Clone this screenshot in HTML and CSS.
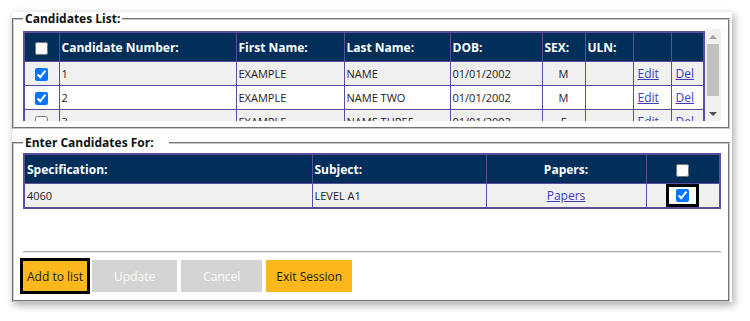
FILE: index.html
```html
<!DOCTYPE html>
<html lang="en">
<head>
  <meta charset="UTF-8">
  <meta name="viewport" content="width=device-width, initial-scale=1.0">
  <title>Candidates</title>
  <link rel="stylesheet" href="styles.css">
</head>
<body>
  <div class="window">
    <fieldset class="group">
      <legend>Candidates List:</legend>
      <div class="list-box">
        <div class="scroll">
          <table class="grid">
            <colgroup>
              <col style="width:35px"><col style="width:177px"><col style="width:108px">
              <col style="width:106px"><col style="width:92px"><col style="width:43px">
              <col style="width:48px"><col style="width:38px"><col>
            </colgroup>
            <thead>
              <tr>
                <th class="center"><input type="checkbox"></th>
                <th>Candidate Number:</th>
                <th>First Name:</th>
                <th>Last Name:</th>
                <th>DOB:</th>
                <th>SEX:</th>
                <th>ULN:</th>
                <th></th>
                <th></th>
              </tr>
            </thead>
            <tbody>
              <tr>
                <td class="center"><input type="checkbox" checked></td>
                <td>1</td>
                <td>EXAMPLE</td>
                <td>NAME</td>
                <td>01/01/2002</td>
                <td class="center">M</td>
                <td></td>
                <td><a href="#">Edit</a></td>
                <td><a href="#">Del</a></td>
              </tr>
              <tr>
                <td class="center"><input type="checkbox" checked></td>
                <td>2</td>
                <td>EXAMPLE</td>
                <td>NAME TWO</td>
                <td>01/01/2002</td>
                <td class="center">M</td>
                <td></td>
                <td><a href="#">Edit</a></td>
                <td><a href="#">Del</a></td>
              </tr>
              <tr>
                <td class="center"><input type="checkbox"></td>
                <td>3</td>
                <td>EXAMPLE</td>
                <td>NAME THREE</td>
                <td>01/01/2002</td>
                <td class="center">F</td>
                <td></td>
                <td><a href="#">Edit</a></td>
                <td><a href="#">Del</a></td>
              </tr>
            </tbody>
          </table>
        </div>
        <!-- classic scrollbar look -->
        <div class="scrollbar">
          <span class="arrow arrow-up"></span>
          <span class="thumb"></span>
          <span class="arrow arrow-down"></span>
        </div>
      </div>
    </fieldset>

    <fieldset class="group group-enter">
      <legend class="legend-wide">Enter Candidates For:</legend>
      <table class="grid">
        <colgroup>
          <col style="width:288px"><col style="width:174px"><col style="width:160px"><col>
        </colgroup>
        <thead>
          <tr>
            <th>Specification:</th>
            <th>Subject:</th>
            <th class="center">Papers:</th>
            <th class="center"><input type="checkbox"></th>
          </tr>
        </thead>
        <tbody>
          <tr>
            <td>4060</td>
            <td>LEVEL A1</td>
            <td class="center"><a href="#" class="papers">Papers</a></td>
            <td class="center"><span class="focused"><input type="checkbox" checked></span></td>
          </tr>
        </tbody>
      </table>
      <hr class="divider">
      <div class="actions">
        <button class="btn btn-add">Add to list</button>
        <button class="btn btn-off">Update</button>
        <button class="btn btn-off">Cancel</button>
        <button class="btn btn-exit">Exit Session</button>
      </div>
    </fieldset>
  </div>
</body>
</html>
```

FILE: styles.css
```css
body {
  margin: 0;
  background: #ffffff;
  font-family: "Open Sans", Arial, sans-serif;
  color: #222;
}

.window {
  margin: 12px;
  width: 720px;
  background: #ffffff;
  box-shadow: 2px 3px 8px rgba(0, 0, 0, 0.35);
}

.group {
  margin: 0 2px 0 0;
  padding: 3px 7px 6px 9px;
  border: 2px groove #c8c8c8;
  min-width: 0;
}

.group legend {
  padding: 0 2px;
  font-size: 12px;
  font-weight: bold;
  line-height: 14px;
  color: #111;
}

.legend-wide {
  padding-right: 15px !important;
}

.group-enter {
  margin-top: 7px;
  padding-bottom: 8px;
}

/* candidates list scroll box */
.list-box {
  display: flex;
  height: 92px;
}

.scroll {
  flex: 1;
  min-width: 0;
  overflow: hidden;
  background: #ffffff;
}

.scrollbar {
  width: 16px;
  display: flex;
  flex-direction: column;
  align-items: center;
  background: #f0f0f0;
}

.arrow {
  height: 15px;
  width: 16px;
  display: flex;
  align-items: center;
  justify-content: center;
}

.arrow::before {
  content: "";
  border-left: 4px solid transparent;
  border-right: 4px solid transparent;
}

.arrow-up::before {
  border-bottom: 4px solid #a3a3a3;
}

.arrow-down {
  margin-top: auto;
}

.arrow-down::before {
  border-top: 4px solid #505050;
}

.thumb {
  width: 12px;
  height: 52px;
  background: #c1c1c1;
}

.grid {
  width: 100%;
  table-layout: fixed;
  border-collapse: collapse;
  border: 2px solid #5b4c9e;
  font-size: 11px;
}

.scroll .grid {
  margin-top: 2px;
}

.grid th {
  height: 28px;
  padding: 0 2px;
  background: #012f5a;
  color: #ffffff;
  font-size: 12px;
  font-weight: bold;
  text-align: left;
  border: 1px solid #5b4c9e;
  white-space: nowrap;
}

.grid td {
  height: 23px;
  padding: 0 2px;
  background: #f0f0f0;
  border: 1px solid #5b4c9e;
  white-space: nowrap;
  overflow: hidden;
}

.grid tbody tr:nth-child(2) td {
  background: #ffffff;
}

.grid .center {
  text-align: center;
}

.grid input[type="checkbox"] {
  margin: 0;
  width: 13px;
  height: 13px;
  vertical-align: middle;
}

.grid a {
  color: #3b3bc4;
  margin-left: 2px;
  font-size: 12px;
}

.grid a.papers {
  margin-left: 0;
}

.focused {
  display: inline-block;
  border: 3px solid #000;
  padding: 2px 7px;
  line-height: 0;
  background: #fff;
}

.divider {
  margin: 42px 0 7px 0;
  border: none;
  border-top: 1px solid #aaa;
  border-bottom: 1px solid #e8e8e8;
}

.actions {
  display: flex;
  gap: 4px;
}

.btn {
  height: 32px;
  border: none;
  font-family: "Open Sans", Arial, sans-serif;
  font-size: 12px;
  cursor: pointer;
}

.btn-add {
  padding: 0 5px;
  background: #ffb81c;
  color: #1a1a1a;
  outline: 3px solid #000;
  outline-offset: -1px;
  margin-left: -1px;
}

.btn-off {
  padding: 0 22px;
  background: #d4d4d4;
  color: #fafafa;
}

.btn-exit {
  padding: 0 10px;
  background: #ffb81c;
  color: #1a1a1a;
}
```
